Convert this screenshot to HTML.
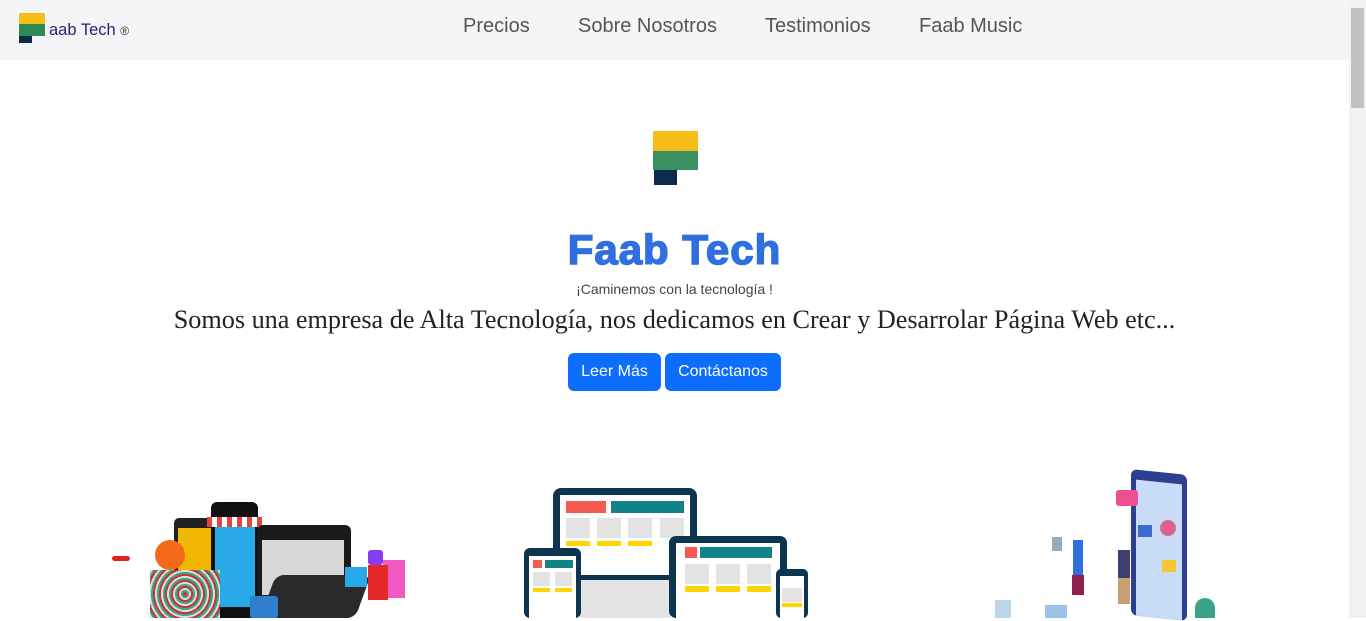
<!DOCTYPE html>
<html><head><meta charset="utf-8"><style>
*{margin:0;padding:0;box-sizing:border-box}
body{width:1366px;height:618px;overflow:hidden;background:#fff;font-family:"Liberation Sans",sans-serif;position:relative}
.a{position:absolute}
nav{position:absolute;left:0;top:0;width:1349px;height:60px;background:#f5f5f7}
.nl{position:absolute;top:15px;font-size:20px;color:#555}
.sb{position:absolute;left:1349px;top:0;width:17px;height:618px;background:#f1f1f1}
.btn{position:absolute;top:353px;height:38px;background:#0d6efd;color:#fff;border-radius:6px;font-size:16px;line-height:38px;text-align:center}
.g{background:#e3e3e3}.y{background:#ffd500}.r{background:#f55a4e}.t{background:#13838a}.d{background:#0e3550}
</style></head><body>
<nav>
<div class="a" style="left:19px;top:13px;width:26px;height:11px;background:#f6bd16"></div>
<div class="a" style="left:19px;top:24px;width:26px;height:12px;background:#2e8b57"></div>
<div class="a" style="left:19px;top:36px;width:13px;height:7px;background:#0d2a4a"></div>
<div class="a" style="left:49px;top:21px;font-size:16.5px;color:#2a1f6e">aab Tech <span style="font-size:12px;color:#333">®</span></div>
<div class="nl" style="left:463px">Precios</div>
<div class="nl" style="left:578px">Sobre Nosotros</div>
<div class="nl" style="left:765px">Testimonios</div>
<div class="nl" style="left:919px">Faab Music</div>
</nav>
<div class="sb"><div class="a" style="left:2px;top:8px;width:13px;height:100px;background:#c1c1c1"></div></div>

<div class="a" style="left:653px;top:131px;width:45px;height:20px;background:#f6bd16"></div>
<div class="a" style="left:653px;top:151px;width:45px;height:19px;background:#3a9060"></div>
<div class="a" style="left:654px;top:170px;width:23px;height:15px;background:#0d2a4a"></div>

<div class="a" style="left:0;width:1349px;top:226px;text-align:center;font-size:42px;font-weight:900;color:#2f6fdf;letter-spacing:1px;-webkit-text-stroke:1.5px #2f6fdf">Faab Tech</div>
<div class="a" style="left:0;width:1349px;top:281px;text-align:center;font-size:14px;color:#444">¡Caminemos con la tecnología !</div>
<div class="a" style="left:0;width:1349px;top:305px;text-align:center;font-family:'Liberation Serif',serif;font-size:26.2px;color:#222">Somos una empresa de Alta Tecnología, nos dedicamos en Crear y Desarrolar Página Web etc...</div>
<div class="btn" style="left:568px;width:93px">Leer Más</div>
<div class="btn" style="left:665px;width:116px">Contáctanos</div>

<!-- center devices -->
<div class="a d" style="left:553px;top:488px;width:144px;height:100px;border-radius:8px"></div>
<div class="a" style="left:560px;top:495px;width:130px;height:80px;background:#fff"></div>
<div class="a r" style="left:566px;top:501px;width:40px;height:12px"></div>
<div class="a t" style="left:611px;top:501px;width:73px;height:12px"></div>
<div class="a g" style="left:566px;top:518px;width:24px;height:20px"></div><div class="a g" style="left:597px;top:518px;width:24px;height:20px"></div><div class="a g" style="left:628px;top:518px;width:24px;height:20px"></div><div class="a g" style="left:660px;top:518px;width:24px;height:20px"></div>
<div class="a y" style="left:566px;top:541px;width:24px;height:5px"></div><div class="a y" style="left:597px;top:541px;width:24px;height:5px"></div><div class="a y" style="left:628px;top:541px;width:24px;height:5px"></div>
<div class="a g" style="left:580px;top:580px;width:90px;height:38px"></div>
<div class="a d" style="left:524px;top:548px;width:57px;height:70px;border-radius:6px"></div>
<div class="a" style="left:529px;top:556px;width:47px;height:62px;background:#fff"></div>
<div class="a r" style="left:533px;top:560px;width:9px;height:8px"></div><div class="a t" style="left:545px;top:560px;width:28px;height:8px"></div>
<div class="a g" style="left:533px;top:572px;width:17px;height:14px"></div><div class="a g" style="left:555px;top:572px;width:17px;height:14px"></div>
<div class="a y" style="left:533px;top:588px;width:17px;height:4px"></div><div class="a y" style="left:555px;top:588px;width:17px;height:4px"></div>
<div class="a d" style="left:669px;top:536px;width:118px;height:82px;border-radius:7px"></div>
<div class="a" style="left:676px;top:543px;width:104px;height:75px;background:#fff"></div>
<div class="a r" style="left:685px;top:547px;width:12px;height:11px"></div><div class="a t" style="left:700px;top:547px;width:72px;height:11px"></div>
<div class="a g" style="left:685px;top:564px;width:24px;height:20px"></div><div class="a g" style="left:716px;top:564px;width:24px;height:20px"></div><div class="a g" style="left:747px;top:564px;width:24px;height:20px"></div>
<div class="a y" style="left:685px;top:586px;width:24px;height:6px"></div><div class="a y" style="left:716px;top:586px;width:24px;height:6px"></div><div class="a y" style="left:747px;top:586px;width:24px;height:6px"></div>
<div class="a d" style="left:776px;top:569px;width:32px;height:49px;border-radius:5px"></div>
<div class="a" style="left:780px;top:576px;width:24px;height:42px;background:#fff"></div>
<div class="a g" style="left:782px;top:588px;width:20px;height:14px"></div><div class="a y" style="left:782px;top:603px;width:20px;height:4px"></div>

<!-- left shopping -->
<div class="a" style="left:174px;top:518px;width:45px;height:100px;background:#222;border-radius:5px"></div>
<div class="a" style="left:178px;top:528px;width:34px;height:70px;background:#f2b705"></div>
<div class="a" style="left:211px;top:502px;width:47px;height:116px;background:#111;border-radius:6px"></div>
<div class="a" style="left:215px;top:527px;width:40px;height:80px;background:#2aa9e8"></div>
<div class="a" style="left:207px;top:517px;width:55px;height:10px;background:repeating-linear-gradient(90deg,#e04444 0 5px,#fff 5px 10px)"></div>
<div class="a" style="left:257px;top:525px;width:94px;height:93px;background:#1a1a1a;border-radius:6px"></div>
<div class="a" style="left:262px;top:540px;width:82px;height:55px;background:#d8d8d8"></div>
<div class="a" style="left:268px;top:575px;width:95px;height:43px;background:#2a2a2a;border-radius:8px;transform:skewX(-20deg)"></div>
<div class="a" style="left:150px;top:570px;width:70px;height:48px;background:repeating-radial-gradient(circle,#c33 0 2px,#3a8 2px 4px,#ddd 4px 6px)"></div>
<div class="a" style="left:155px;top:540px;width:30px;height:30px;background:#f36a1c;border-radius:50%"></div>
<div class="a" style="left:112px;top:556px;width:18px;height:5px;background:#d22;border-radius:3px"></div>
<div class="a" style="left:368px;top:550px;width:15px;height:15px;background:#8a3df0;border-radius:3px"></div>
<div class="a" style="left:383px;top:560px;width:22px;height:38px;background:#f25ac3"></div>
<div class="a" style="left:368px;top:565px;width:20px;height:35px;background:#e52828"></div>
<div class="a" style="left:345px;top:567px;width:22px;height:20px;background:#2aa9e8"></div>
<div class="a" style="left:250px;top:596px;width:28px;height:22px;background:#2f7fd0;border-radius:3px"></div>

<!-- right app team -->
<div class="a" style="left:1131px;top:472px;width:56px;height:146px;background:#2d3f8f;border-radius:6px;transform:skewY(6deg)"></div>
<div class="a" style="left:1136px;top:482px;width:46px;height:136px;background:#c9dcf7;transform:skewY(6deg)"></div>
<div class="a" style="left:1116px;top:490px;width:22px;height:16px;background:#ee4f8f;border-radius:3px"></div>
<div class="a" style="left:1138px;top:525px;width:14px;height:12px;background:#3b6ad0"></div>
<div class="a" style="left:1160px;top:520px;width:16px;height:16px;background:#e06090;border-radius:50%"></div>
<div class="a" style="left:1162px;top:560px;width:14px;height:12px;background:#f7c530"></div>
<div class="a" style="left:1073px;top:540px;width:10px;height:40px;background:#2f6fdf"></div>
<div class="a" style="left:1072px;top:575px;width:12px;height:20px;background:#8e1f4e"></div>
<div class="a" style="left:1118px;top:550px;width:12px;height:30px;background:#3d3f70"></div>
<div class="a" style="left:1118px;top:578px;width:12px;height:26px;background:#c8a070"></div>
<div class="a" style="left:1052px;top:537px;width:10px;height:14px;background:#9ab"></div>
<div class="a" style="left:995px;top:600px;width:16px;height:18px;background:#bcd6e8"></div>
<div class="a" style="left:1045px;top:605px;width:22px;height:13px;background:#9bc2e8"></div>
<div class="a" style="left:1195px;top:598px;width:20px;height:20px;background:#3aa48a;border-radius:50% 50% 0 0"></div>
</body></html>
